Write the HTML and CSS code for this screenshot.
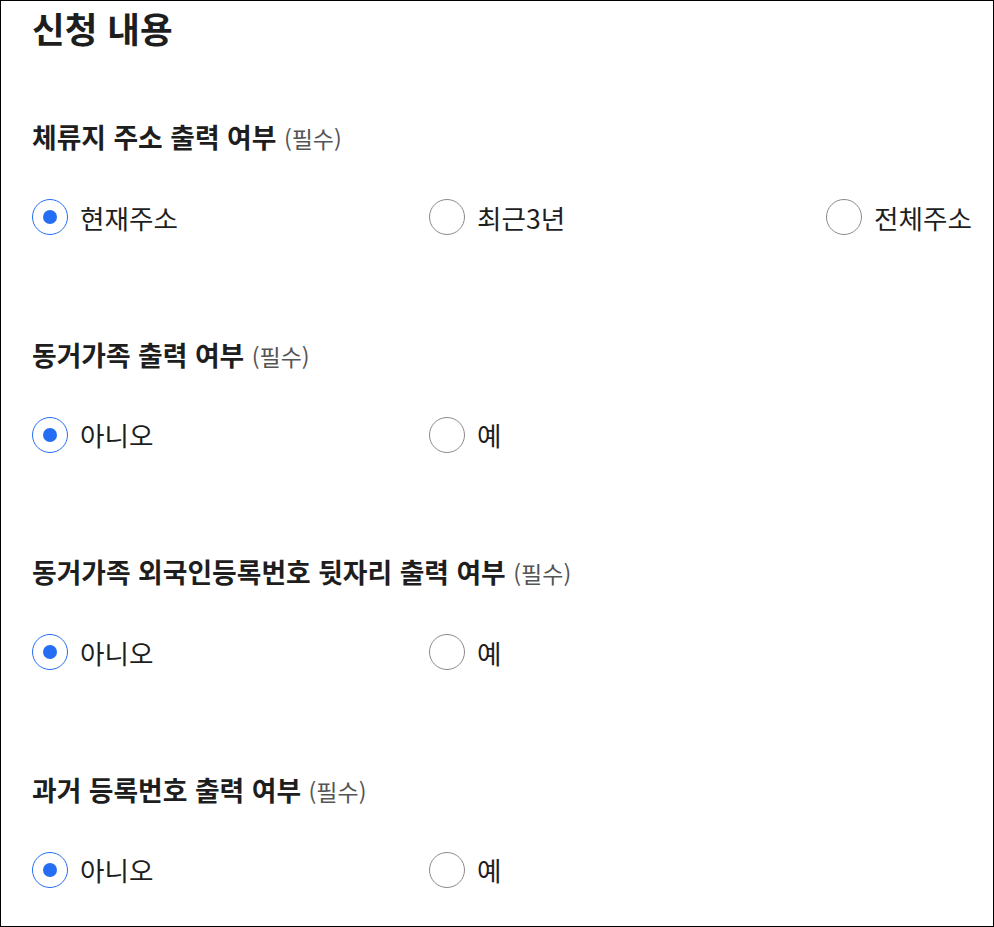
FILE: index.html
```html
<!DOCTYPE html>
<html lang="ko">
<head>
  <meta charset="utf-8">
  <title>신청 내용</title>
  <link rel="stylesheet" href="styles.css">
</head>
<body>
  <div class="page">
    <h2 class="title">신청 내용</h2>

    <div class="field">
      <p class="field-label">체류지 주소 출력 여부 <span class="req">(필수)</span></p>
      <div class="options">
        <label class="option"><input type="radio" name="addr" checked><span class="mark"></span>현재주소</label>
        <label class="option"><input type="radio" name="addr"><span class="mark"></span>최근3년</label>
        <label class="option"><input type="radio" name="addr"><span class="mark"></span>전체주소</label>
      </div>
    </div>

    <div class="field">
      <p class="field-label">동거가족 출력 여부 <span class="req">(필수)</span></p>
      <div class="options">
        <label class="option"><input type="radio" name="family" checked><span class="mark"></span>아니오</label>
        <label class="option"><input type="radio" name="family"><span class="mark"></span>예</label>
      </div>
    </div>

    <div class="field">
      <p class="field-label">동거가족 외국인등록번호 뒷자리 출력 여부 <span class="req">(필수)</span></p>
      <div class="options">
        <label class="option"><input type="radio" name="regno" checked><span class="mark"></span>아니오</label>
        <label class="option"><input type="radio" name="regno"><span class="mark"></span>예</label>
      </div>
    </div>

    <div class="field">
      <p class="field-label">과거 등록번호 출력 여부 <span class="req">(필수)</span></p>
      <div class="options">
        <label class="option"><input type="radio" name="past" checked><span class="mark"></span>아니오</label>
        <label class="option"><input type="radio" name="past"><span class="mark"></span>예</label>
      </div>
    </div>
  </div>
</body>
</html>
```

FILE: styles.css
```css
body {
  margin: 0;
  font-family: "Noto Sans CJK KR", "Noto Sans", sans-serif;
  color: #1e1e1e;
  background: #fff;
}
.page {
  box-sizing: border-box;
  height: 927px;
  border: 1px solid #000;
  padding: 0 31px;
  overflow: hidden;
}
.title {
  margin: 3px 0 0;
  font-size: 35.5px;
  line-height: 48px;
  font-weight: 700;
}
.field {
  height: 217.5px;
}
.field:first-of-type {
  margin-top: 69px;
}
.field-label {
  margin: 0 0 45px;
  font-size: 26.8px;
  line-height: 32px;
  font-weight: 700;
}
.req {
  font-size: 23px;
  font-weight: 400;
  color: #555;
}
.options {
  display: flex;
}
.option {
  width: 397px;
  flex-shrink: 0;
  display: flex;
  align-items: center;
  gap: 12px;
  height: 36px;
  font-size: 26.6px;
  cursor: pointer;
}
.option input {
  display: none;
}
.mark {
  box-sizing: border-box;
  width: 36px;
  height: 36px;
  border: 1px solid #8a8a8a;
  border-radius: 50%;
  display: flex;
  align-items: center;
  justify-content: center;
}
.option input:checked + .mark {
  border-color: #256ef4;
}
.option input:checked + .mark::after {
  content: "";
  width: 14px;
  height: 14px;
  border-radius: 50%;
  background: #256ef4;
}
```
